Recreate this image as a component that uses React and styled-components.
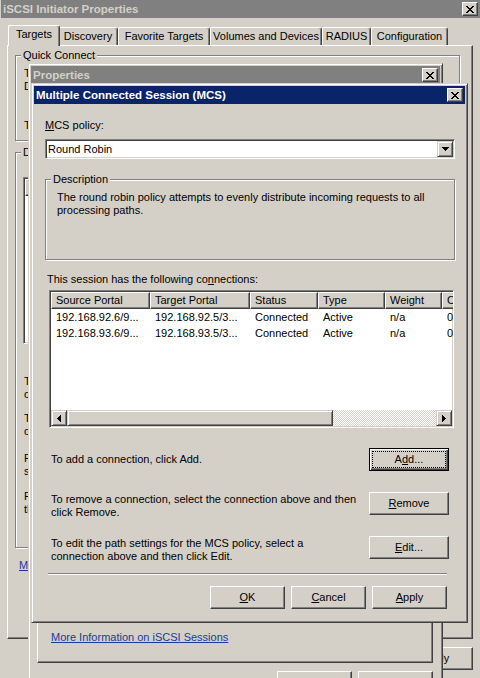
import styled, { createGlobalStyle, css } from 'styled-components';

const GlobalStyle = createGlobalStyle`
  html, body {
    margin: 0;
    padding: 0;
    background: #d4d0c8;
  }
  body {
    font-family: "Liberation Sans", Arial, sans-serif;
    font-size: 11px;
    line-height: 13px;
    color: #000;
    overflow: hidden;
  }
`;

// classic 3d edges
const raised = css`
  border: 1px solid;
  border-color: #fff #404040 #404040 #fff;
  box-shadow: inset -1px -1px #808080;
`;

const bevel = css`
  border: 1px solid;
  border-color: #d4d0c8 #404040 #404040 #d4d0c8;
  box-shadow: inset 1px 1px #fff, inset -1px -1px #808080;
`;

const sunken = css`
  border: 1px solid;
  border-color: #808080 #fff #fff #808080;
  box-shadow: inset 1px 1px #404040, inset -1px -1px #d4d0c8;
`;

const Desktop = styled.div`
  position: relative;
  width: 480px;
  height: 678px;
  overflow: hidden;
  background: #d4d0c8;
`;

// each window is its own stacking layer, later windows sit on top
const Window = styled.div`
  position: absolute;
  z-index: ${p => p.$z};
  isolation: isolate;
  left: ${p => p.$x}px;
  top: ${p => p.$y}px;
  width: ${p => p.$w}px;
  height: ${p => p.$h}px;
  box-sizing: border-box;
  display: flex;
  flex-direction: column;
  padding: 2px;
  background: #d4d0c8;
  ${bevel}
`;

const TitleBar = styled.div`
  flex: none;
  height: 18px;
  display: flex;
  align-items: center;
  justify-content: space-between;
  padding: 0 2px;
  background: ${p => (p.$active ? '#0a246a' : '#808080')};
  color: ${p => (p.$active ? '#fff' : '#d4d0c8')};
  font-weight: bold;
  font-size: 11.5px;
  white-space: nowrap;
`;

const CloseButton = styled.span`
  flex: none;
  width: 16px;
  height: 14px;
  box-sizing: border-box;
  display: flex;
  align-items: center;
  justify-content: center;
  background: #d4d0c8;
  ${raised}
`;

const GlyphSvg = styled.svg`
  display: block;
  flex: none;
`;

const CLOSE_X = [
  [0, 0, 2], [6, 0, 2], [1, 1, 2], [5, 1, 2], [2, 2, 4], [3, 3, 2],
  [2, 4, 4], [1, 5, 2], [5, 5, 2], [0, 6, 2], [6, 6, 2],
];
const ARROW_DOWN = [[0, 0, 7], [1, 1, 5], [2, 2, 3], [3, 3, 1]];

const Glyph = ({ rows, w, h, vertical }) => (
  <GlyphSvg width={w} height={h} viewBox={`0 0 ${w} ${h}`} shapeRendering="crispEdges">
    {rows.map(([a, b, len], i) =>
      vertical ? (
        <rect key={i} x={a} y={b} width={1} height={len} fill="#000" />
      ) : (
        <rect key={i} x={a} y={b} width={len} height={1} fill="#000" />
      )
    )}
  </GlyphSvg>
);

const ArrowLeft = () => (
  <Glyph w={4} h={7} vertical rows={[[0, 3, 1], [1, 2, 3], [2, 1, 5], [3, 0, 7]]} />
);
const ArrowRight = () => (
  <Glyph w={4} h={7} vertical rows={[[3, 3, 1], [2, 2, 3], [1, 1, 5], [0, 0, 7]]} />
);

const Close = () => (
  <CloseButton>
    <Glyph rows={CLOSE_X} w={8} h={7} />
  </CloseButton>
);

const SheetBody = styled.div`
  flex: 1;
  min-height: 0;
  display: flex;
  flex-direction: column;
  padding: ${p => p.$pad};
`;

const TabStrip = styled.div`
  flex: none;
  display: flex;
  align-items: flex-end;
  height: 20px;
  padding-left: 3px;
`;

const Tab = styled.div`
  position: relative;
  z-index: ${p => (p.$selected ? 2 : 1)};
  flex: none;
  box-sizing: border-box;
  width: ${p => p.$w}px;
  height: ${p => (p.$selected ? 21 : 18)}px;
  margin: ${p => (p.$selected ? '0 -2px -1px' : '0')};
  padding-bottom: ${p => (p.$selected ? 3 : 0)}px;
  display: flex;
  align-items: center;
  justify-content: center;
  background: #d4d0c8;
  border-top: 1px solid #fff;
  border-left: 1px solid #fff;
  border-right: 1px solid #404040;
  border-radius: 2px 3px 0 0;
  box-shadow: inset -1px 0 #808080;
  white-space: nowrap;
`;

const TabPanel = styled.div`
  flex: 1;
  min-height: 0;
  display: flex;
  flex-direction: column;
  justify-content: ${p => p.$justify || 'flex-start'};
  padding: ${p => p.$pad};
  ${raised}
`;

const GroupBox = styled.div`
  flex: none;
  display: flex;
  flex-direction: column;
  box-sizing: border-box;
  height: ${p => p.$h}px;
  margin-top: ${p => p.$mt || 0}px;
  border: 1px solid #808080;
  box-shadow: 1px 1px #fff, inset 1px 1px #fff;
`;

const GroupCaption = styled.span`
  align-self: flex-start;
  margin: -7px 0 0 5px;
  padding: 0 2px;
  background: #d4d0c8;
  white-space: nowrap;
`;

const GroupContent = styled.div`
  display: flex;
  flex-direction: column;
  padding: ${p => p.$pad};
`;

const Text = styled.div`
  margin: ${p => p.$m || '0'};
  white-space: nowrap;
`;

const Button = styled.button`
  flex: none;
  width: ${p => p.$w || 75}px;
  height: 23px;
  box-sizing: border-box;
  margin: 0;
  padding: 0;
  display: flex;
  align-items: center;
  justify-content: center;
  font: inherit;
  color: #000;
  background: #d4d0c8;
  ${raised}
  ${p =>
    p.$default &&
    css`
      border-color: #000;
      box-shadow: inset 1px 1px #fff, inset -1px -1px #404040, inset -2px -2px #808080;
    `}
`;

const FocusRect = styled.span`
  flex: 1;
  align-self: stretch;
  margin: 2px;
  display: flex;
  align-items: center;
  justify-content: center;
  border: 1px dotted #000;
`;

const ButtonRow = styled.div`
  flex: none;
  display: flex;
  justify-content: flex-end;
  gap: 6px;
  margin-top: ${p => p.$mt || 0}px;
  padding-right: ${p => p.$pr || 0}px;
`;

const Link = styled.a`
  align-self: flex-start;
  margin: ${p => p.$m || '0'};
  color: #1a3a9e;
  text-decoration: underline;
  white-space: nowrap;
`;

const TextBox = styled.div`
  flex: 1;
  height: 21px;
  box-sizing: border-box;
  background: #fff;
  ${sunken}
`;

const FormRow = styled.div`
  display: flex;
  align-items: center;
  gap: 6px;
  margin-top: ${p => p.$mt || 0}px;
`;

const ListBox = styled.div`
  flex: none;
  height: ${p => p.$h}px;
  margin: ${p => p.$m || '0'};
  box-sizing: border-box;
  display: flex;
  flex-direction: column;
  padding: 1px;
  background: #fff;
  overflow: hidden;
  ${sunken}
`;

const HeaderRow = styled.div`
  flex: none;
  display: flex;
  height: 17px;
`;

const HeaderCell = styled.div`
  flex: none;
  width: ${p => p.$w}px;
  box-sizing: border-box;
  display: flex;
  align-items: center;
  padding-left: 4px;
  background: #d4d0c8;
  white-space: nowrap;
  overflow: hidden;
  ${raised}
`;

const GridBody = styled.div`
  flex: 1;
  min-height: 0;
`;

const GridRow = styled.div`
  display: flex;
  height: 16px;
  align-items: center;
`;

const GridCell = styled.div`
  flex: none;
  width: ${p => p.$w}px;
  box-sizing: border-box;
  padding-left: 5px;
  white-space: nowrap;
  overflow: hidden;
`;

const ScrollBar = styled.div`
  flex: none;
  display: flex;
  height: 16px;
`;

const ScrollButton = styled.div`
  flex: none;
  width: 16px;
  box-sizing: border-box;
  display: flex;
  align-items: center;
  justify-content: center;
  background: #d4d0c8;
  ${bevel}
`;

const ScrollThumb = styled.div`
  flex: none;
  width: ${p => p.$w}px;
  box-sizing: border-box;
  background: #d4d0c8;
  ${bevel}
`;

const ScrollTrack = styled.div`
  flex: 1;
  background: repeating-conic-gradient(#fff 0 25%, #d4d0c8 0 50%) 0 0 / 2px 2px;
`;

/* MCS dialog parts */
const McsBody = styled.div`
  flex: 1;
  min-height: 0;
  display: flex;
  flex-direction: column;
  padding: 0 10px 0 11px;
`;

const Combo = styled.div`
  flex: none;
  height: 20px;
  margin-top: 7px;
  box-sizing: border-box;
  display: flex;
  align-items: center;
  justify-content: space-between;
  padding: 1px 1px 1px 2px;
  background: #fff;
  ${sunken}
`;

const ComboButton = styled.div`
  flex: none;
  width: 16px;
  height: 16px;
  box-sizing: border-box;
  display: flex;
  align-items: center;
  justify-content: center;
  background: #d4d0c8;
  ${bevel}
`;

const ActionRow = styled.div`
  flex: none;
  display: flex;
  align-items: flex-start;
  justify-content: space-between;
  margin-top: ${p => p.$mt}px;
  padding: 0 ${p => p.$px ?? 6}px;
`;

const ActionText = styled.div`
  padding-top: ${p => p.$pt || 0}px;
  white-space: nowrap;
`;

const Separator = styled.div`
  flex: none;
  height: 0;
  margin: 10px 8px 0 3px;
  border-top: 1px solid #808080;
  border-bottom: 1px solid #fff;
`;

const COLUMNS = [
  { title: 'Source Portal', w: 99 },
  { title: 'Target Portal', w: 100 },
  { title: 'Status', w: 68 },
  { title: 'Type', w: 67 },
  { title: 'Weight', w: 57 },
  { title: 'Connection ID', w: 90 },
];

const CONNECTIONS = [
  ['192.168.92.6/9...', '192.168.92.5/3...', 'Connected', 'Active', 'n/a', '0x1'],
  ['192.168.93.6/9...', '192.168.93.5/3...', 'Connected', 'Active', 'n/a', '0x2'],
];

const TARGET_ACTIONS = [
  { lines: ['To connect using advanced options, select a target and then', 'click Connect.'], btn: 'Connect', mt: 31 },
  { lines: ['To completely disconnect a target, select the target and then', 'click Disconnect.'], btn: 'Disconnect', mt: 11 },
  { lines: ['For target properties, including configuration of sessions,', 'select the target and click Properties.'], btn: 'Properties...', mt: 14 },
  { lines: ['For configuration of devices associated with a target, select', 'the target and then click Devices.'], btn: 'Devices...', mt: 12 },
];

const App = () => {
  return (
    <Desktop>
      <GlobalStyle />

      {/* background: iSCSI Initiator Properties */}
      <Window $z={1} $x={-2} $y={-3} $w={485} $h={683}>
        <TitleBar>
          <span>iSCSI Initiator Properties</span>
          <Close />
        </TitleBar>
        <SheetBody $pad="7px 7px 7px 6px">
          <TabStrip>
            <Tab $w={52} $selected>Targets</Tab>
            <Tab $w={60}>Discovery</Tab>
            <Tab $w={92}>Favorite Targets</Tab>
            <Tab $w={112}>Volumes and Devices</Tab>
            <Tab $w={49}>RADIUS</Tab>
            <Tab $w={77}>Configuration</Tab>
          </TabStrip>
          <TabPanel $pad="9px 12px 0 7px">
            <GroupBox $h={86}>
              <GroupCaption>Quick Connect</GroupCaption>
              <GroupContent $pad="5px 8px 0 8px">
                <Text>
                  To discover and log on to a target using a basic connection, type the IP address or
                  <br />
                  DNS name of the target and then click Quick Connect.
                </Text>
                <FormRow $mt={21}>
                  <span>Target:</span>
                  <TextBox />
                  <Button $w={90}>Quick Connect...</Button>
                </FormRow>
              </GroupContent>
            </GroupBox>
            <GroupBox $h={396} $mt={11}>
              <GroupCaption>Discovered targets</GroupCaption>
              <GroupContent $pad="0 8px 0 7px">
                <ListBox $h={167} $m="18px 0 0 0">
                  <HeaderRow>
                    <HeaderCell $w={300}>Name</HeaderCell>
                    <HeaderCell $w={120}>Status</HeaderCell>
                  </HeaderRow>
                </ListBox>
                {TARGET_ACTIONS.map(a => (
                  <ActionRow key={a.btn} $mt={a.mt} $px={1}>
                    <ActionText>
                      {a.lines[0]}
                      <br />
                      {a.lines[1]}
                    </ActionText>
                    <Button>{a.btn}</Button>
                  </ActionRow>
                ))}
              </GroupContent>
            </GroupBox>
            <Link $m="11px 0 0 4px">More about basic iSCSI connections and targets</Link>
          </TabPanel>
          <ButtonRow $mt={8}>
            <Button>OK</Button>
            <Button>Cancel</Button>
            <Button><u>A</u>pply</Button>
          </ButtonRow>
        </SheetBody>
      </Window>

      {/* middle: target Properties */}
      <Window $z={2} $x={28} $y={63} $w={415} $h={641}>
        <TitleBar>
          <span>Properties</span>
          <Close />
        </TitleBar>
        <SheetBody $pad="7px 7px 7px 6px">
          <TabStrip>
            <Tab $w={58} $selected>Sessions</Tab>
            <Tab $w={80}>Portal Groups</Tab>
          </TabStrip>
          <TabPanel $pad="0 13px 18px 13px" $justify="flex-end">
            <Link>More Information on iSCSI Sessions</Link>
          </TabPanel>
          <ButtonRow $mt={8}>
            <Button><u>O</u>K</Button>
            <Button>Cancel</Button>
          </ButtonRow>
        </SheetBody>
      </Window>

      {/* front: MCS dialog */}
      <Window $z={3} $x={31} $y={83} $w={437} $h={540}>
        <TitleBar $active>
          <span>Multiple Connected Session (MCS)</span>
          <Close />
        </TitleBar>
        <McsBody>
          <Text $m="15px 0 0 0"><u>M</u>CS policy:</Text>
          <Combo>
            <span>Round Robin</span>
            <ComboButton>
              <Glyph rows={ARROW_DOWN} w={7} h={4} />
            </ComboButton>
          </Combo>
          <GroupBox $h={81} $mt={20}>
            <GroupCaption>Description</GroupCaption>
            <GroupContent $pad="5px 0 0 11px">
              <Text>
                The round robin policy attempts to evenly distribute incoming requests to all
                <br />
                processing paths.
              </Text>
            </GroupContent>
          </GroupBox>
          <Text $m="13px 0 0 2px">This session has the following co<u>n</u>nections:</Text>
          <ListBox $h={138} $m="4px 1px 0 4px">
            <HeaderRow>
              {COLUMNS.map(c => (
                <HeaderCell key={c.title} $w={c.w}>{c.title}</HeaderCell>
              ))}
            </HeaderRow>
            <GridBody>
              {CONNECTIONS.map((row, i) => (
                <GridRow key={i}>
                  {row.map((v, j) => (
                    <GridCell key={j} $w={COLUMNS[j].w}>{v}</GridCell>
                  ))}
                </GridRow>
              ))}
            </GridBody>
            <ScrollBar>
              <ScrollButton><ArrowLeft /></ScrollButton>
              <ScrollThumb $w={266} />
              <ScrollTrack />
              <ScrollButton><ArrowRight /></ScrollButton>
            </ScrollBar>
          </ListBox>

          <ActionRow $mt={20}>
            <ActionText $pt={5}>To add a connection, click Add.</ActionText>
            <Button $w={80} $default>
              <FocusRect>A<u>d</u>d...</FocusRect>
            </Button>
          </ActionRow>
          <ActionRow $mt={21}>
            <ActionText $pt={1}>
              To remove a connection, select the connection above and then
              <br />
              click Remove.
            </ActionText>
            <Button $w={80}><u>R</u>emove</Button>
          </ActionRow>
          <ActionRow $mt={17}>
            <ActionText $pt={1}>
              To edit the path settings for the MCS policy, select a
              <br />
              connection above and then click Edit.
            </ActionText>
            <Button $w={80}><u>E</u>dit...</Button>
          </ActionRow>

          <Separator />
          <ButtonRow $mt={11} $pr={8}>
            <Button><u>O</u>K</Button>
            <Button><u>C</u>ancel</Button>
            <Button><u>A</u>pply</Button>
          </ButtonRow>
        </McsBody>
      </Window>
    </Desktop>
  );
};

export default App;
